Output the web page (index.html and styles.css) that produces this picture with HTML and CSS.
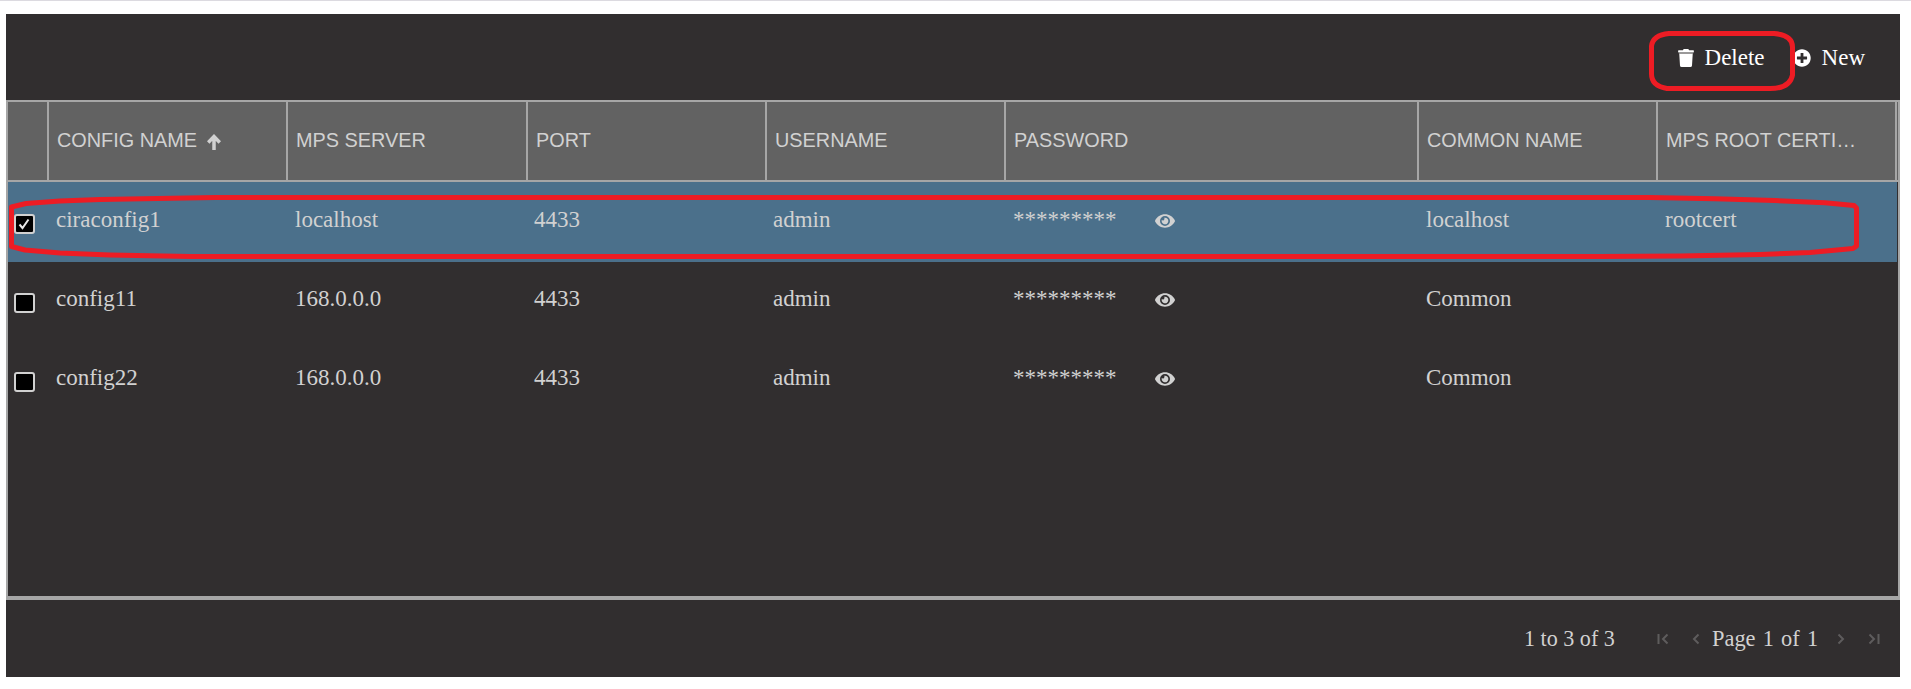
FILE: index.html
```html
<!DOCTYPE html>
<html lang="en">
<head>
<meta charset="utf-8">
<title>CIRA Configs</title>
<link rel="stylesheet" href="styles.css">
</head>
<body>
<svg class="defs" width="0" height="0">
  <symbol id="eye" viewBox="0 0 576 512"><path d="M572.52 241.4C518.29 135.59 410.93 64 288 64S57.68 135.64 3.48 241.41a32.35 32.35 0 0 0 0 29.19C57.71 376.41 165.07 448 288 448s230.32-71.64 284.52-177.41a32.35 32.35 0 0 0 0-29.19zM288 400a144 144 0 1 1 144-144 143.93 143.93 0 0 1-144 144zm0-240a95.31 95.31 0 0 0-25.31 3.79 47.85 47.85 0 0 1-66.9 66.9A95.78 95.78 0 1 0 288 160z"/></symbol>
</svg>
<main class="panel">
  <div class="toolbar">
    <button class="action delete">
      <svg class="icon-trash" viewBox="0 0 448 512"><path d="M432 32H312l-9.4-18.7A24 24 0 0 0 281.1 0H166.8a23.72 23.72 0 0 0-21.4 13.3L136 32H16A16 16 0 0 0 0 48v32a16 16 0 0 0 16 16h416a16 16 0 0 0 16-16V48a16 16 0 0 0-16-16zM53.2 467a48 48 0 0 0 47.9 45h245.800a48 48 0 0 0 47.900-45L416 128H32z"/><path class="lid" d="M20 90h408v42H20z"/></svg>
      <span>Delete</span>
    </button>
    <button class="action new">
      <svg class="icon-plus" viewBox="0 0 512 512"><path d="M256 8C119 8 8 119 8 256s111 248 248 248 248-111 248-248S393 8 256 8zm144 276c0 6.600-5.400 12-12 12h-92v92c0 6.600-5.400 12-12 12h-56c-6.600 0-12-5.400-12-12v-92h-92c-6.600 0-12-5.400-12-12v-56c0-6.600 5.400-12 12-12h92v-92c0-6.600 5.400-12 12-12h56c6.600 0 12 5.400 12 12v92h92c6.600 0 12 5.400 12 12v56z"/></svg>
      <span>New</span>
    </button>
  </div>
  <div class="grid">
    <div class="cols head">
      <div class="th"></div>
      <div class="th">CONFIG NAME<svg class="icon-sort" viewBox="0 0 14 16"><path d="M7 16V3M1.200 8.500 7 2.500 12.800 8.500"/></svg></div>
      <div class="th">MPS SERVER</div>
      <div class="th">PORT</div>
      <div class="th">USERNAME</div>
      <div class="th">PASSWORD</div>
      <div class="th">COMMON NAME</div>
      <div class="th">MPS ROOT CERTI…</div>
    </div>
    <div class="cols row selected">
      <div class="check"><span class="box"><svg viewBox="0 0 16 16"><path d="M3.500 8.500 6.500 12 12.500 3.500"/></svg></span></div>
      <div class="td">ciraconfig1</div><div class="td">localhost</div><div class="td">4433</div><div class="td">admin</div>
      <div class="td secret"><span class="mask">*********</span><svg class="icon-eye"><use href="#eye"/></svg></div>
      <div class="td">localhost</div><div class="td">rootcert</div>
    </div>
    <div class="cols row">
      <div class="check"><span class="box"></span></div>
      <div class="td">config11</div><div class="td">168.0.0.0</div><div class="td">4433</div><div class="td">admin</div>
      <div class="td secret"><span class="mask">*********</span><svg class="icon-eye"><use href="#eye"/></svg></div>
      <div class="td">Common</div><div class="td"></div>
    </div>
    <div class="cols row">
      <div class="check"><span class="box"></span></div>
      <div class="td">config22</div><div class="td">168.0.0.0</div><div class="td">4433</div><div class="td">admin</div>
      <div class="td secret"><span class="mask">*********</span><svg class="icon-eye"><use href="#eye"/></svg></div>
      <div class="td">Common</div><div class="td"></div>
    </div>
  </div>
  <div class="pager">
    <span class="summary">1 to 3 of 3</span>
    <svg class="nav first" viewBox="0 0 12 12"><path d="M1.500 1v10M10.500 1.500 6 6l4.500 4.500"/></svg>
    <svg class="nav prev" viewBox="0 0 8 12"><path d="M6.500 1.500 2 6l4.500 4.500"/></svg>
    <span class="page">Page 1 of 1</span>
    <svg class="nav next" viewBox="0 0 8 12"><path d="M1.500 1.500 6 6l-4.500 4.500"/></svg>
    <svg class="nav last" viewBox="0 0 12 12"><path d="M10.500 1v10M1.500 1.500 6 6l-4.500 4.500"/></svg>
  </div>
</main>
<svg class="marks" viewBox="0 0 1911 689">
  <path d="M1669 33.500H1774Q1792.500 35 1792.500 47V75Q1790 88.500 1770 88.500H1667Q1651.500 86 1651.500 74V46Q1653 35 1669 33.500Z"/>
  <path d="M11.500 207 26 203.500 60 201 100 199.500 215 197.500H1650L1715 198.700 1775 200.500 1825 202.700 1854 205.500 1856.500 208V246L1853 248.500 1810 252.500 1760 254.500 1680 256 1600 256.500H190L110 255 60 253 25 250 11.500 246.500Z"/>
</svg>
</body>
</html>
```
FILE: styles.css
```css
* { box-sizing: border-box; }
body {
  margin: 0;
  height: 689px;
  overflow: hidden;
  background: #fff;
  border-top: 1px solid #dcdae0;
  font-family: "Liberation Serif", "Times New Roman", serif;
  font-size: 23px;
  color: #d1d1d1;
}
.defs { position: absolute; }
.panel {
  display: flex;
  flex-direction: column;
  width: 1894px;
  height: 663px;
  margin: 13px 0 0 6px;
  background: #312e2f;
}
.toolbar {
  display: flex;
  justify-content: flex-end;
  align-items: center;
  height: 86px;
  padding: 1px 35px 0 0;
}
.action {
  display: flex;
  align-items: center;
  padding: 0;
  border: 0;
  background: none;
  font: inherit;
  color: #fff;
  line-height: 26px;
}
.action svg { fill: #fff; }
.delete { margin-right: 28px; }
.icon-trash { width: 16px; height: 18px; margin: 1px 11px 0 0; }
.icon-trash .lid { fill: #9b9a9a; }
.icon-plus { width: 18px; height: 18px; margin: 1px 11px 0 0; }
.grid {
  height: 500px;
  border: 2px solid #a6a6a6;
  border-bottom-width: 4px;
}
.cols {
  display: grid;
  grid-template-columns: 41px 239px 240px 239px 239px 413px 239px 239px;
}
.head {
  height: 80px;
  background: #626262;
  border-bottom: 2px solid #a6a6a6;
  font-family: "Liberation Sans", Arial, sans-serif;
  font-size: 19.850px;
}
.th {
  display: flex;
  align-items: center;
  min-width: 0;
  padding: 0 0 1px 8px;
  border-right: 2px solid #a6a6a6;
  white-space: nowrap;
}
.icon-sort { width: 14px; height: 16px; margin: 2px 0 0 10px; }
.icon-sort path { fill: none; stroke: #d1d1d1; stroke-width: 3.500; }
.row {
  grid-template-columns: 41px 239px 239px 239px 240px 413px 239px 239px;
  width: 1889px;
  height: 79px;
  line-height: 26px;
}
.selected { background: #4b708b; box-shadow: 0 1px #4b708b; }
.td { padding: 25px 0 0 7px; white-space: nowrap; }
.check { padding: 32px 0 0 6px; }
.box {
  display: block;
  width: 21px;
  height: 20px;
  border: 2px solid #d1d1d1;
  border-radius: 3px;
  background: #000;
}
.box svg { display: block; width: 16px; height: 16px; }
.box path { fill: none; stroke: #e8e8e8; stroke-width: 2; }
.secret { display: flex; }
.mask { width: 142px; }
.icon-eye { width: 20px; height: 18px; margin-top: 5px; fill: #d1d1d1; }
.pager {
  display: flex;
  align-items: center;
  height: 77px;
  font-size: 22.400px;
  padding: 1px 0 0 1518px;
}
.summary { width: 133px; white-space: nowrap; font-size: 22.100px; }
.page { width: 125px; white-space: nowrap; word-spacing: 1.600px; }
.nav { flex: none; height: 12px; }
.nav path { fill: none; stroke: #5e5c5d; stroke-width: 2; }
.first, .last { width: 12px; }
.prev, .next { width: 8px; }
.first { margin-right: 23px; }
.prev { margin-right: 12px; }
.next { margin-right: 23px; }
.marks {
  position: absolute;
  left: 0;
  top: 0;
  width: 1911px;
  height: 689px;
  pointer-events: none;
}
.marks path { fill: none; stroke: #ed1c24; stroke-width: 5; stroke-linejoin: round; }
```
